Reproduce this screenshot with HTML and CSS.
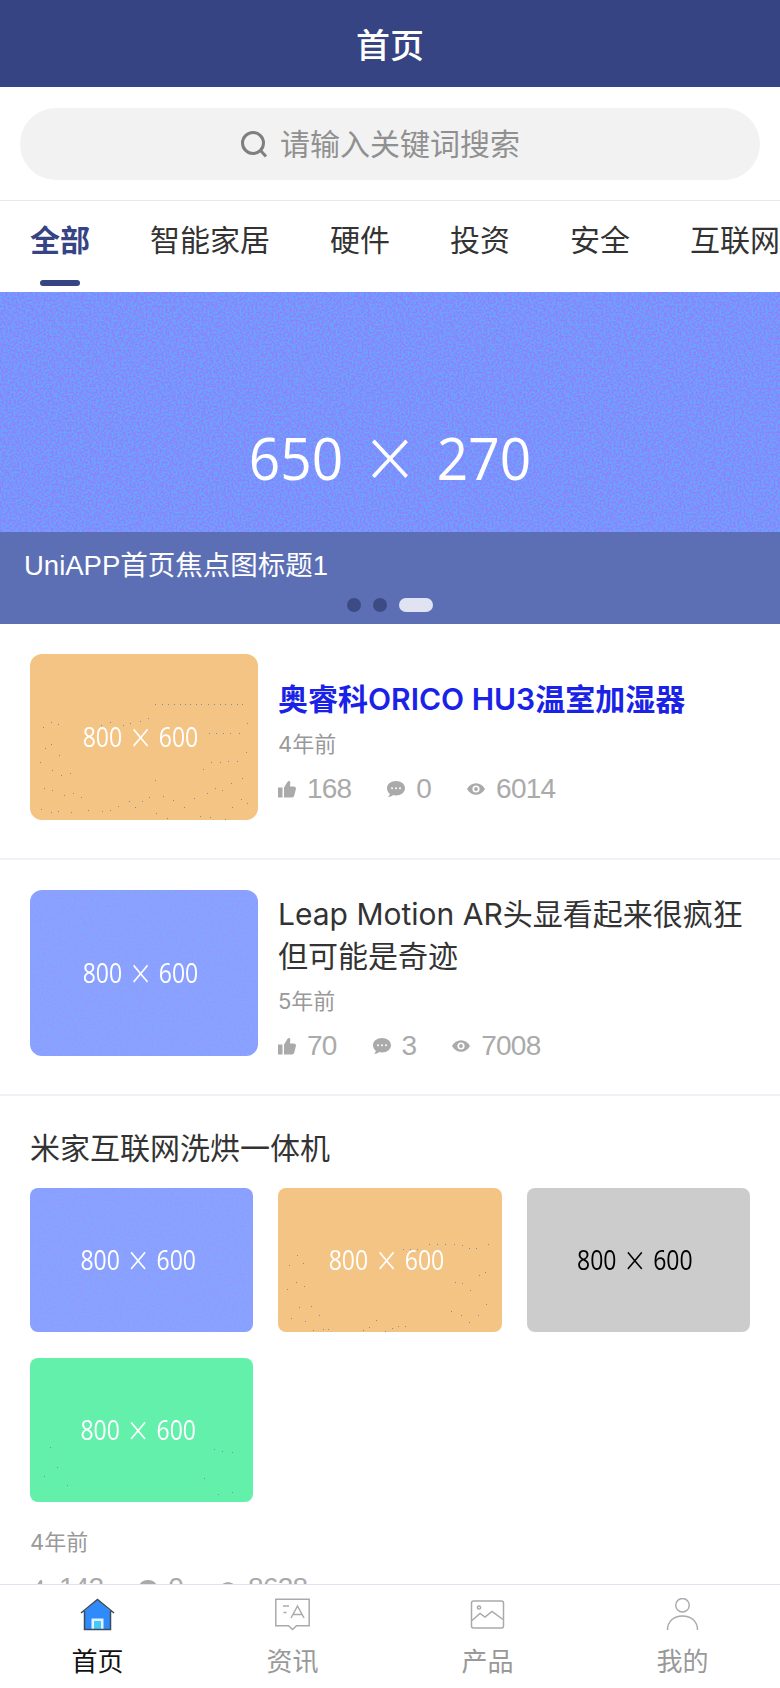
FILE: index.html
```html
<!DOCTYPE html>
<html lang="zh-CN">
<head>
    <meta charset="UTF-8">
    <meta name="viewport" content="width=device-width, initial-scale=1.0">
    <title>首页</title>
    <link rel="stylesheet" href="styles.css">
</head>
<body>
    <svg class="defs" aria-hidden="true">
        <filter id="grain" x="0" y="0" width="100%" height="100%" color-interpolation-filters="sRGB">
            <feTurbulence type="fractalNoise" baseFrequency="0.5" numOctaves="2" seed="4"/>
            <feColorMatrix values="4 0 0 0 -1.5  -4 0 0 0 2.5  0 0 0 0 1  0 0 0 0 1"/>
        </filter>
        <symbol id="i-like" viewBox="0 0 18 17">
            <path d="M0 7h4.500v10H0zM6 7l3.400-5.600C10.400-.2 12.500.6 12.300 2.400L12 6h3.800c1.400 0 2.400 1.200 2.100 2.500l-1.600 6.600c-.3 1.100-1.100 1.900-2.200 1.900H6z"/>
        </symbol>
        <symbol id="i-comment" viewBox="0 0 18 16">
            <path d="M9 0c5 0 9 3.100 9 7.200s-4 7.200-9 7.200c-1 0-1.900-.1-2.800-.4C5 15.200 3 16 1 16c1-.9 1.700-2.100 1.800-3.300C1 11.400 0 9.400 0 7.200 0 3.100 4 0 9 0z"/>
            <circle cx="5" cy="7.300" r="1" fill="#fff"/>
            <circle cx="9" cy="7.300" r="1" fill="#fff"/>
            <circle cx="13" cy="7.300" r="1" fill="#fff"/>
        </symbol>
        <symbol id="i-eye" viewBox="0 0 17 11">
            <path d="M0 5.500C2 2 5 0 8.500 0S15 2 17 5.500C15 9 12 11 8.500 11S2 9 0 5.500z"/>
            <circle cx="8.500" cy="5.500" r="3.400" fill="#fff"/>
            <circle cx="8.500" cy="5.500" r="1.800"/>
        </symbol>
    </svg>

    <header class="page-title">首页</header>

    <main class="content">
        <div class="search-bar">
            <div class="search-box">
                <svg class="search-icon" viewBox="0 0 28 28">
                    <circle cx="13" cy="13" r="10.500"/>
                    <path d="M20.500 20.500L26 26.500"/>
                </svg>
                <span>请输入关键词搜索</span>
            </div>
        </div>

        <nav class="tabs">
            <div class="tab active">全部<i></i></div>
            <div class="tab">智能家居<i></i></div>
            <div class="tab">硬件<i></i></div>
            <div class="tab">投资<i></i></div>
            <div class="tab">安全<i></i></div>
            <div class="tab">互联网<i></i></div>
        </nav>

        <section class="banner">
            <svg class="noise"><rect width="100%" height="100%" filter="url(#grain)"/></svg>
            <span class="size-label banner-size">650 <b>×</b> 270</span>
            <div class="banner-caption">
                <div class="banner-title">UniAPP首页焦点图标题1</div>
                <div class="dots"><i></i><i></i><i class="on"></i></div>
            </div>
        </section>

        <article class="news">
            <div class="news-row">
                <div class="thumb thumb-large orange">
                    <svg class="specks"><path d="M125 50h1M132 50h1M138 50h1M144 50h1M150 50h1M155 50h1M160 50h1M166 50h1M171 50h1M178 50h1M184 50h1M190 50h1M195 50h1M201 50h1M207 50h1M212 50h1M13 73h1M21 68h1M28 70h1M71 71h1M80 68h1M93 71h1M100 69h1M110 67h1M118 64h1M217 69h1M179 79h1M186 79h1M193 79h1M200 79h1M209 79h1M15 94h1M21 90h1M29 101h1M10 108h1M22 116h1M31 121h1M40 119h1M216 98h1M181 108h1M190 108h1M198 107h1M207 107h1M173 115h1M125 126h1M212 124h1M201 129h1M14 134h1M22 136h1M34 141h1M43 139h1M51 143h1M185 134h1M192 136h1M177 139h1M133 142h1M119 143h1M112 147h1M99 147h1M143 146h1M164 144h1M211 145h1M217 149h1M88 152h1M105 153h1M154 153h1M202 153h1M11 155h1M21 158h1M28 157h1M41 158h1M58 156h1M72 157h1M80 156h1M126 159h1M137 164h1M170 162h1M180 163h1M195 165h1"/></svg>
                    <span class="size-label">800 <b>×</b> 600</span>
                </div>
                <div class="news-body">
                    <h2 class="news-title read">奥睿科ORICO HU3温室加湿器</h2>
                    <div class="news-date">4年前</div>
                    <div class="stats">
                        <span><svg><use href="#i-like"/></svg>168</span>
                        <span><svg><use href="#i-comment"/></svg>0</span>
                        <span><svg><use href="#i-eye"/></svg>6014</span>
                    </div>
                </div>
            </div>
        </article>

        <article class="news">
            <div class="news-row">
                <div class="thumb thumb-large blue">
                    <svg class="noise faint"><rect width="100%" height="100%" filter="url(#grain)"/></svg>
                    <span class="size-label">800 <b>×</b> 600</span>
                </div>
                <div class="news-body">
                    <h2 class="news-title">Leap Motion AR头显看起来很疯狂但可能是奇迹</h2>
                    <div class="news-date">5年前</div>
                    <div class="stats">
                        <span><svg><use href="#i-like"/></svg>70</span>
                        <span><svg><use href="#i-comment"/></svg>3</span>
                        <span><svg><use href="#i-eye"/></svg>7008</span>
                    </div>
                </div>
            </div>
        </article>

        <article class="news gallery">
            <h2 class="news-title">米家互联网洗烘一体机</h2>
            <div class="thumb-grid">
                <div class="thumb blue">
                    <svg class="noise faint"><rect width="100%" height="100%" filter="url(#grain)"/></svg>
                    <span class="size-label">800 <b>×</b> 600</span>
                </div>
                <div class="thumb orange">
                    <svg class="specks"><path d="M125 61h1M132 61h1M139 61h1M151 56h1M159 56h1M167 56h1M176 56h1M184 57h1M191 60h1M198 60h1M210 56h1M19 67h1M11 77h1M25 75h1M207 84h1M201 87h1M18 94h1M26 98h1M9 101h1M177 94h1M184 95h1M192 102h1M208 116h1M21 119h1M33 118h1M173 123h1M41 127h1M183 127h1M200 127h1M13 130h1M27 133h1M98 132h1M191 134h1M91 139h1M114 140h1M120 138h1M127 138h1M35 142h1M45 141h1M50 141h1M85 142h1M107 143h1"/></svg>
                    <span class="size-label">800 <b>×</b> 600</span>
                </div>
                <div class="thumb grey"><span class="size-label">800 <b>×</b> 600</span></div>
                <div class="thumb green">
                    <svg class="specks"><path d="M20 89h1M184 91h1M192 93h1M202 94h1M27 109h1M14 118h1M174 120h1M37 127h1M202 134h1M188 136h1"/></svg>
                    <span class="size-label">800 <b>×</b> 600</span>
                </div>
            </div>
            <div class="news-date">4年前</div>
            <div class="stats">
                <span><svg><use href="#i-like"/></svg>142</span>
                <span><svg><use href="#i-comment"/></svg>0</span>
                <span><svg><use href="#i-eye"/></svg>8628</span>
            </div>
        </article>
    </main>

    <footer class="tabbar">
        <div class="tabbar-item active">
            <svg viewBox="0 0 35 32">
                <path d="M4.500 12.500L17.500 1.500l13 11V31h-26z" fill="#2f8bfb"/>
                <path d="M11.500 20h12v11h-12z" fill="#dff3ff"/>
                <path d="M14 22.500h7V31h-7z" fill="#47c8f5"/>
                <path d="M1 14.500L17.500 1 34 14.500M4.500 12.500V31h26V12.500" fill="none" stroke="#3d4a5c" stroke-width="1.500"/>
            </svg>
            <span>首页</span>
        </div>
        <div class="tabbar-item">
            <svg viewBox="0 0 35 32">
                <path d="M.800.800h33.400v26.400H21.500l-4 3.800-4-3.800H.800z"/>
                <path d="M8 7.500h6M8.500 14h3M16 19.500L22.500 7.500 29 19.500M18 16h9"/>
            </svg>
            <span>资讯</span>
        </div>
        <div class="tabbar-item">
            <svg viewBox="0 0 35 32">
                <rect x="1.500" y="2.500" width="32" height="27" rx="2"/>
                <circle cx="9" cy="9" r="1.600"/>
                <path d="M2 22l8-7 5 3.500 7-5.500 11 8"/>
            </svg>
            <span>产品</span>
        </div>
        <div class="tabbar-item">
            <svg viewBox="0 0 35 34">
                <circle cx="17.500" cy="7.500" r="7"/>
                <path d="M2 33C2 24 8.500 18.500 17.500 18.500S33 24 33 33"/>
            </svg>
            <span>我的</span>
        </div>
    </footer>
</body>
</html>
```

FILE: styles.css
```css
* {
    box-sizing: border-box;
}
body {
    margin: 0;
    width: 780px;
    height: 1688px;
    display: flex;
    flex-direction: column;
    overflow: hidden;
    background: #fff;
    color: #333;
    font-family: Inter, "Noto Sans CJK SC", sans-serif;
}
.defs {
    position: absolute;
    width: 0;
    height: 0;
}
.page-title {
    height: 87px;
    flex-shrink: 0;
    display: flex;
    align-items: center;
    justify-content: center;
    background: #364484;
    color: #fff;
    font-size: 34px;
    font-weight: 500;
}
.content {
    flex: 1;
    min-height: 0;
    overflow: hidden;
}

/* search */
.search-bar {
    padding: 21px 20px 20px;
    border-bottom: 1px solid #e8e9f0;
}
.search-box {
    height: 72px;
    padding-right: 20px;
    border-radius: 36px;
    background: #f2f2f2;
    display: flex;
    align-items: center;
    justify-content: center;
    gap: 12px;
    color: #909090;
    font-size: 30px;
}
.search-box span {
    padding-bottom: 5px;
}
.search-icon {
    width: 28px;
    height: 28px;
    fill: none;
    stroke: #7f7f7f;
    stroke-width: 3;
}

/* category tabs */
.tabs {
    display: flex;
    gap: 60px;
    padding-left: 30px;
    overflow: hidden;
}
.tab {
    flex-shrink: 0;
    display: flex;
    flex-direction: column;
    align-items: center;
    padding-top: 18px;
    font-size: 30px;
    line-height: 42px;
    white-space: nowrap;
}
.tab i {
    width: 40px;
    height: 6px;
    margin-top: 19px;
    margin-bottom: 6px;
    border-radius: 3px;
}
.tab.active {
    color: #364484;
    font-weight: 700;
}
.tab.active i {
    background: #364484;
}

/* banner */
.banner {
    position: relative;
    height: 332px;
    display: flex;
    align-items: center;
    justify-content: center;
    background: #7b97fc;
}
.noise {
    position: absolute;
    inset: 0;
    width: 100%;
    height: 100%;
    opacity: 0.16;
}
.noise.faint {
    opacity: 0.05;
}
.size-label {
    position: relative;
    font-family: "Open Sans", sans-serif;
    font-size: 23px;
    word-spacing: 2.5px;
    white-space: nowrap;
    transform: scaleY(1.15);
}
.size-label b {
    font-size: 1.5em;
    font-weight: 300;
    line-height: 0;
    vertical-align: -0.12em;
}
.banner-size {
    top: -2px;
    color: #fff;
    font-size: 55px;
    word-spacing: 9px;
    transform: scaleY(1.07);
}
.banner-caption {
    position: absolute;
    left: 0;
    right: 0;
    bottom: 0;
    height: 92px;
    padding-top: 14px;
    background: #5c6fb5;
    color: #fff;
}
.banner-title {
    padding-left: 24px;
    font-family: "Liberation Sans", "Noto Sans CJK SC", sans-serif;
    font-size: 27.5px;
    line-height: 40px;
}
.dots {
    display: flex;
    justify-content: center;
    gap: 12px;
    margin-top: 12px;
}
.dots i {
    width: 14px;
    height: 14px;
    border-radius: 7px;
    background: #3d4b85;
}
.dots i.on {
    width: 34px;
    background: #e0e4f2;
}

/* news list */
.news {
    padding: 30px 30px 38px;
    border-bottom: 2px solid #f0f1f6;
}
.news-row {
    height: 166px;
    display: flex;
    align-items: center;
    gap: 20px;
}
.news-body {
    flex: 1;
    min-width: 0;
    margin-top: 11px;
}
.news-title {
    margin: 0;
    font-size: 30px;
    font-weight: 400;
    line-height: 42px;
    color: #333;
}
.news-title.read {
    color: #1a22e8;
    font-weight: 600;
}
.news-date {
    margin-top: 9px;
    font-size: 22px;
    line-height: 30px;
    color: #999;
}
.stats {
    display: flex;
    gap: 36px;
    margin-top: 12px;
    font-family: "Liberation Sans", sans-serif;
    font-size: 28px;
    letter-spacing: -0.8px;
    line-height: 36px;
    color: #aaa;
}
.stats span {
    display: flex;
    align-items: center;
    gap: 11px;
}
.stats svg {
    width: 18px;
    height: 18px;
    fill: #aaa;
}

/* placeholder pictures */
.thumb {
    position: relative;
    height: 144px;
    border-radius: 8px;
    overflow: hidden;
    display: flex;
    align-items: center;
    justify-content: center;
    padding-right: 7px;
    color: #fff;
}
.thumb-large {
    width: 228px;
    height: 166px;
    flex-shrink: 0;
    border-radius: 12px;
}
.orange {
    background: #f4c485;
}
.blue {
    background: #8ba3ff;
}
.grey {
    background: #ccc;
    color: #000;
}
.green {
    background: #63f0ab;
}
.specks {
    position: absolute;
    inset: 0;
    width: 100%;
    height: 100%;
    fill: none;
    stroke: #7f8ca8;
    stroke-width: 1;
    shape-rendering: crispEdges;
}

/* picture grid */
.gallery {
    border-bottom: 0;
}
.gallery .news-title {
    padding-top: 1px;
}
.gallery .stats {
    margin-top: 13px;
}
.thumb-grid {
    display: grid;
    grid-template-columns: repeat(3, 1fr);
    gap: 26px 25px;
    margin: 19px 0 25px;
}

/* bottom bar */
.tabbar {
    height: 104px;
    flex-shrink: 0;
    display: grid;
    grid-template-columns: repeat(4, 1fr);
    border-top: 1px solid #e0e3ef;
    background: #fff;
}
.tabbar-item {
    display: flex;
    flex-direction: column;
    align-items: center;
    padding-top: 13px;
    color: #999;
    font-size: 26px;
    line-height: 36px;
}
.tabbar-item svg {
    width: 35px;
    height: 33px;
    margin-bottom: 13px;
    fill: none;
    stroke: #aaa;
    stroke-width: 1.5;
}
.tabbar-item.active {
    color: #111;
}
.tabbar-item.active svg {
    stroke: none;
}
```
